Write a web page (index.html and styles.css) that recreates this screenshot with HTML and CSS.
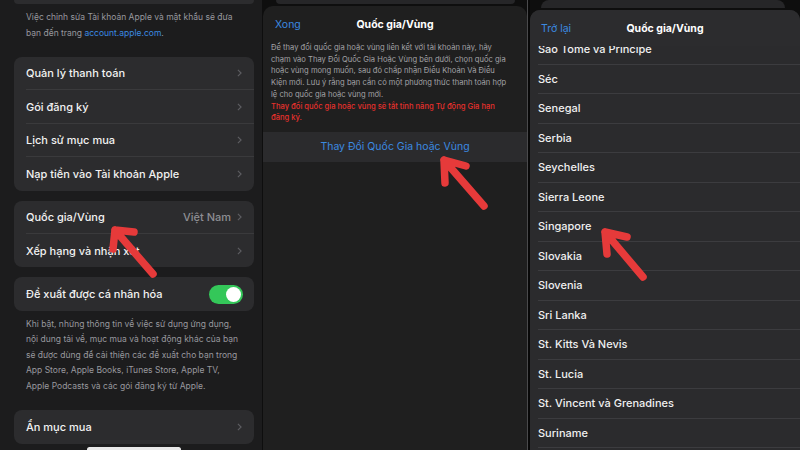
FILE: index.html
```html
<!DOCTYPE html>
<html lang="vi">
  <head>
    <meta charset="UTF-8" />
    <title>Quốc gia/Vùng</title>
    <link rel="stylesheet" href="styles.css">
  </head>
  <body>
    <div class="screen">
      <!-- Màn hình 1: cài đặt tài khoản -->
      <section class="phone phone-settings">
        <div class="card card-stub"></div>
        <p class="note">
          Việc chỉnh sửa Tài khoản Apple và mật khẩu sẽ đưa<br>
          bạn đến trang <span class="link">account.apple.com</span>.
        </p>

        <div class="card">
          <div class="row"><span class="label">Quản lý thanh toán</span><svg class="chev" viewBox="0 0 6 10"><path d="M1 1l4 4-4 4" /></svg></div>
          <div class="row"><span class="label">Gói đăng ký</span><svg class="chev" viewBox="0 0 6 10"><path d="M1 1l4 4-4 4" /></svg></div>
          <div class="row"><span class="label">Lịch sử mục mua</span><svg class="chev" viewBox="0 0 6 10"><path d="M1 1l4 4-4 4" /></svg></div>
          <div class="row"><span class="label">Nạp tiền vào Tài khoản Apple</span><svg class="chev" viewBox="0 0 6 10"><path d="M1 1l4 4-4 4" /></svg></div>
        </div>

        <div class="card card-gap">
          <div class="row"><span class="label">Quốc gia/Vùng</span><span class="value">Việt Nam</span><svg class="chev" viewBox="0 0 6 10"><path d="M1 1l4 4-4 4" /></svg></div>
          <div class="row"><span class="label">Xếp hạng và nhận xét</span><svg class="chev" viewBox="0 0 6 10"><path d="M1 1l4 4-4 4" /></svg></div>
        </div>

        <div class="card card-gap">
          <div class="row"><span class="label">Đề xuất được cá nhân hóa</span><span class="toggle"><span class="knob"></span></span></div>
        </div>

        <p class="desc">
          Khi bật, những thông tin về việc sử dụng ứng dụng,<br>
          nội dung tải về, mục mua và hoạt động khác của bạn<br>
          sẽ được dùng để cải thiện các đề xuất cho bạn trong<br>
          App Store, Apple Books, iTunes Store, Apple TV,<br>
          Apple Podcasts và các gói đăng ký từ Apple.
        </p>

        <div class="card card-last">
          <div class="row"><span class="label">Ẩn mục mua</span><svg class="chev" viewBox="0 0 6 10"><path d="M1 1l4 4-4 4" /></svg></div>
        </div>

        <div class="home-bar"></div>
      </section>

      <!-- Màn hình 2: bảng thay đổi quốc gia -->
      <section class="phone phone-sheet">
        <div class="peek"></div>
        <div class="sheet">
          <header class="sheet-head">
            <span class="nav-btn">Xong</span>
            <h2 class="sheet-title">Quốc gia/Vùng</h2>
            <span></span>
          </header>
          <p class="sheet-text">
            Để thay đổi quốc gia hoặc vùng liên kết với tài khoản này, hãy<br>
            chạm vào Thay Đổi Quốc Gia Hoặc Vùng bên dưới, chọn quốc gia<br>
            hoặc vùng mong muốn, sau đó chấp nhận Điều Khoản Và Điều<br>
            Kiện mới. Lưu ý rằng bạn cần có một phương thức thanh toán hợp<br>
            lệ cho quốc gia hoặc vùng mới.<br>
            <span class="warn">Thay đổi quốc gia hoặc vùng sẽ tắt tính năng Tự động Gia hạn<br>
            đăng ký.</span>
          </p>
          <div class="sheet-action">Thay Đổi Quốc Gia hoặc Vùng</div>
        </div>
      </section>

      <div class="divider"></div>

      <!-- Màn hình 3: danh sách quốc gia -->
      <section class="phone phone-list">
        <div class="peek"></div>
        <div class="sheet sheet-list">
          <header class="sheet-head">
            <span class="nav-btn">Trở lại</span>
            <h2 class="sheet-title">Quốc gia/Vùng</h2>
            <span></span>
          </header>
          <ul class="countries">
            <li>São Tomé và Príncipe</li>
            <li>Séc</li>
            <li>Senegal</li>
            <li>Serbia</li>
            <li>Seychelles</li>
            <li>Sierra Leone</li>
            <li>Singapore</li>
            <li>Slovakia</li>
            <li>Slovenia</li>
            <li>Sri Lanka</li>
            <li>St. Kitts Và Nevis</li>
            <li>St. Lucia</li>
            <li>St. Vincent và Grenadines</li>
            <li>Suriname</li>
            <li></li>
          </ul>
        </div>
      </section>

      <!-- mũi tên chỉ dẫn -->
      <svg class="arrows" viewBox="0 0 800 450">
        <g fill="none" stroke="#e63a3a" stroke-width="7.5" stroke-linecap="round" stroke-linejoin="round">
          <path d="M153 274L115 230M134 232L115 230L113 249" />
          <path d="M484 206L444 160M466 166L444 160L445 183" />
          <path d="M643 277L605 232M627 237L605 232L607 254" />
        </g>
      </svg>
    </div>
  </body>
</html>
```

FILE: styles.css
```css
* {
  margin: 0;
  padding: 0;
  box-sizing: border-box;
}

body {
  width: 800px;
  height: 450px;
  overflow: hidden;
  background: #000;
  font-family: Inter, "Noto Sans", sans-serif;
  color: #f2f2f2;
}

.screen {
  position: relative;
  display: flex;
  width: 800px;
  height: 450px;
  overflow: hidden;
}

.phone {
  height: 450px;
  overflow: hidden;
  flex-shrink: 0;
}

/* ---- cài đặt ---- */

.phone-settings {
  width: 262px;
  padding: 0 8px 0 14px;
  background: #1c1c1d;
  display: flex;
  flex-direction: column;
}

.phone-settings > * {
  flex-shrink: 0;
}

.card {
  background: #2c2c2e;
  border-radius: 8px;
}

.card-stub {
  height: 4px;
  border-radius: 0 0 8px 8px;
}

.note {
  margin: 5px 0 0 12px;
  font-size: 8.5px;
  line-height: 16px;
  color: #98989d;
}

.link {
  color: #3b8ae0;
}

.note + .card {
  margin-top: 16px;
}

.card-gap {
  margin-top: 10px;
}

.card-last {
  margin-top: 16px;
}

.row {
  display: flex;
  align-items: center;
  height: 33.4px;
  margin-left: 12px;
  padding-right: 12px;
  border-bottom: 1px solid #3a3a3c;
  font-size: 11px;
  font-weight: 500;
}

.row:last-child {
  border-bottom: none;
}

.label {
  flex: 1;
}

.value {
  color: #8e8e93;
  margin-right: 6px;
}

.chev {
  width: 5px;
  height: 8px;
  fill: none;
  stroke: #5e5e62;
  stroke-width: 1.4;
}

.toggle {
  width: 34px;
  height: 19px;
  border-radius: 10px;
  background: #34c759;
  display: flex;
  justify-content: flex-end;
  align-items: center;
  padding: 2px;
  margin-right: -1px;
}

.knob {
  width: 15px;
  height: 15px;
  border-radius: 50%;
  background: #fff;
}

.desc {
  margin: 6px 0 0 12px;
  font-size: 8.5px;
  line-height: 15.5px;
  color: #98989d;
}

.home-bar {
  width: 94px;
  height: 5px;
  margin: 3px 0 0 73px;
  border-radius: 3px;
  background: #e8e8e8;
}

/* ---- bảng (sheet) ---- */

.phone-sheet {
  width: 265px;
  background: #0e0e0e;
  display: flex;
  flex-direction: column;
}

.peek {
  flex-shrink: 0;
  height: 4px;
  margin: 0 12px 2px 14px;
  border-radius: 0 0 8px 8px;
  background: #262628;
}

.sheet {
  flex: 1;
  margin-left: 1px;
  background: #1f1f1f;
  border-radius: 10px 10px 0 0;
}

.sheet-head {
  display: grid;
  grid-template-columns: 1fr auto 1fr;
  align-items: center;
  height: 36px;
  padding: 0 12px;
}

.nav-btn {
  color: #3b8ae0;
  font-size: 10.5px;
}

.sheet-title {
  font-size: 10.5px;
  font-weight: 700;
  color: #fff;
}

.sheet-text {
  padding: 0 8px;
  font-size: 7.6px;
  line-height: 11.7px;
  color: #a2a2a6;
}

.warn {
  color: #e5302c;
  font-weight: 500;
}

.sheet-action {
  margin-top: 8px;
  height: 30px;
  display: flex;
  justify-content: center;
  align-items: center;
  background: #2b2b2d;
  color: #3b8ae0;
  font-size: 10.5px;
}

.divider {
  flex-shrink: 0;
  width: 3px;
  height: 450px;
  background: #080808;
  border-left: 1px solid #4a4a4c;
}

/* ---- danh sách quốc gia ---- */

.phone-list {
  width: 270px;
  background: #0e0e0e;
  display: flex;
  flex-direction: column;
}

.phone-list .peek {
  height: 8px;
  margin: 0 15px 2px 11px;
  border-radius: 8px 8px 0 0;
  background: #262628;
}

.sheet-list {
  margin-left: 0;
  background: #2b2b2d;
  display: flex;
  flex-direction: column;
  overflow: hidden;
}

.sheet-list .sheet-head {
  flex-shrink: 0;
  position: relative;
  z-index: 1;
  height: 36px;
  padding: 0 11px;
  background: #2c2c2e;
}

.countries {
  flex-shrink: 0;
  list-style: none;
  margin-top: -11px;
}

.countries li {
  height: 29.5px;
  display: flex;
  align-items: center;
  margin-left: 8px;
  border-bottom: 1px solid #3c3c3f;
  font-size: 11px;
  font-weight: 500;
  color: #f0f0f0;
}

.arrows {
  position: absolute;
  left: 0;
  top: 0;
  width: 800px;
  height: 450px;
  pointer-events: none;
}
```
